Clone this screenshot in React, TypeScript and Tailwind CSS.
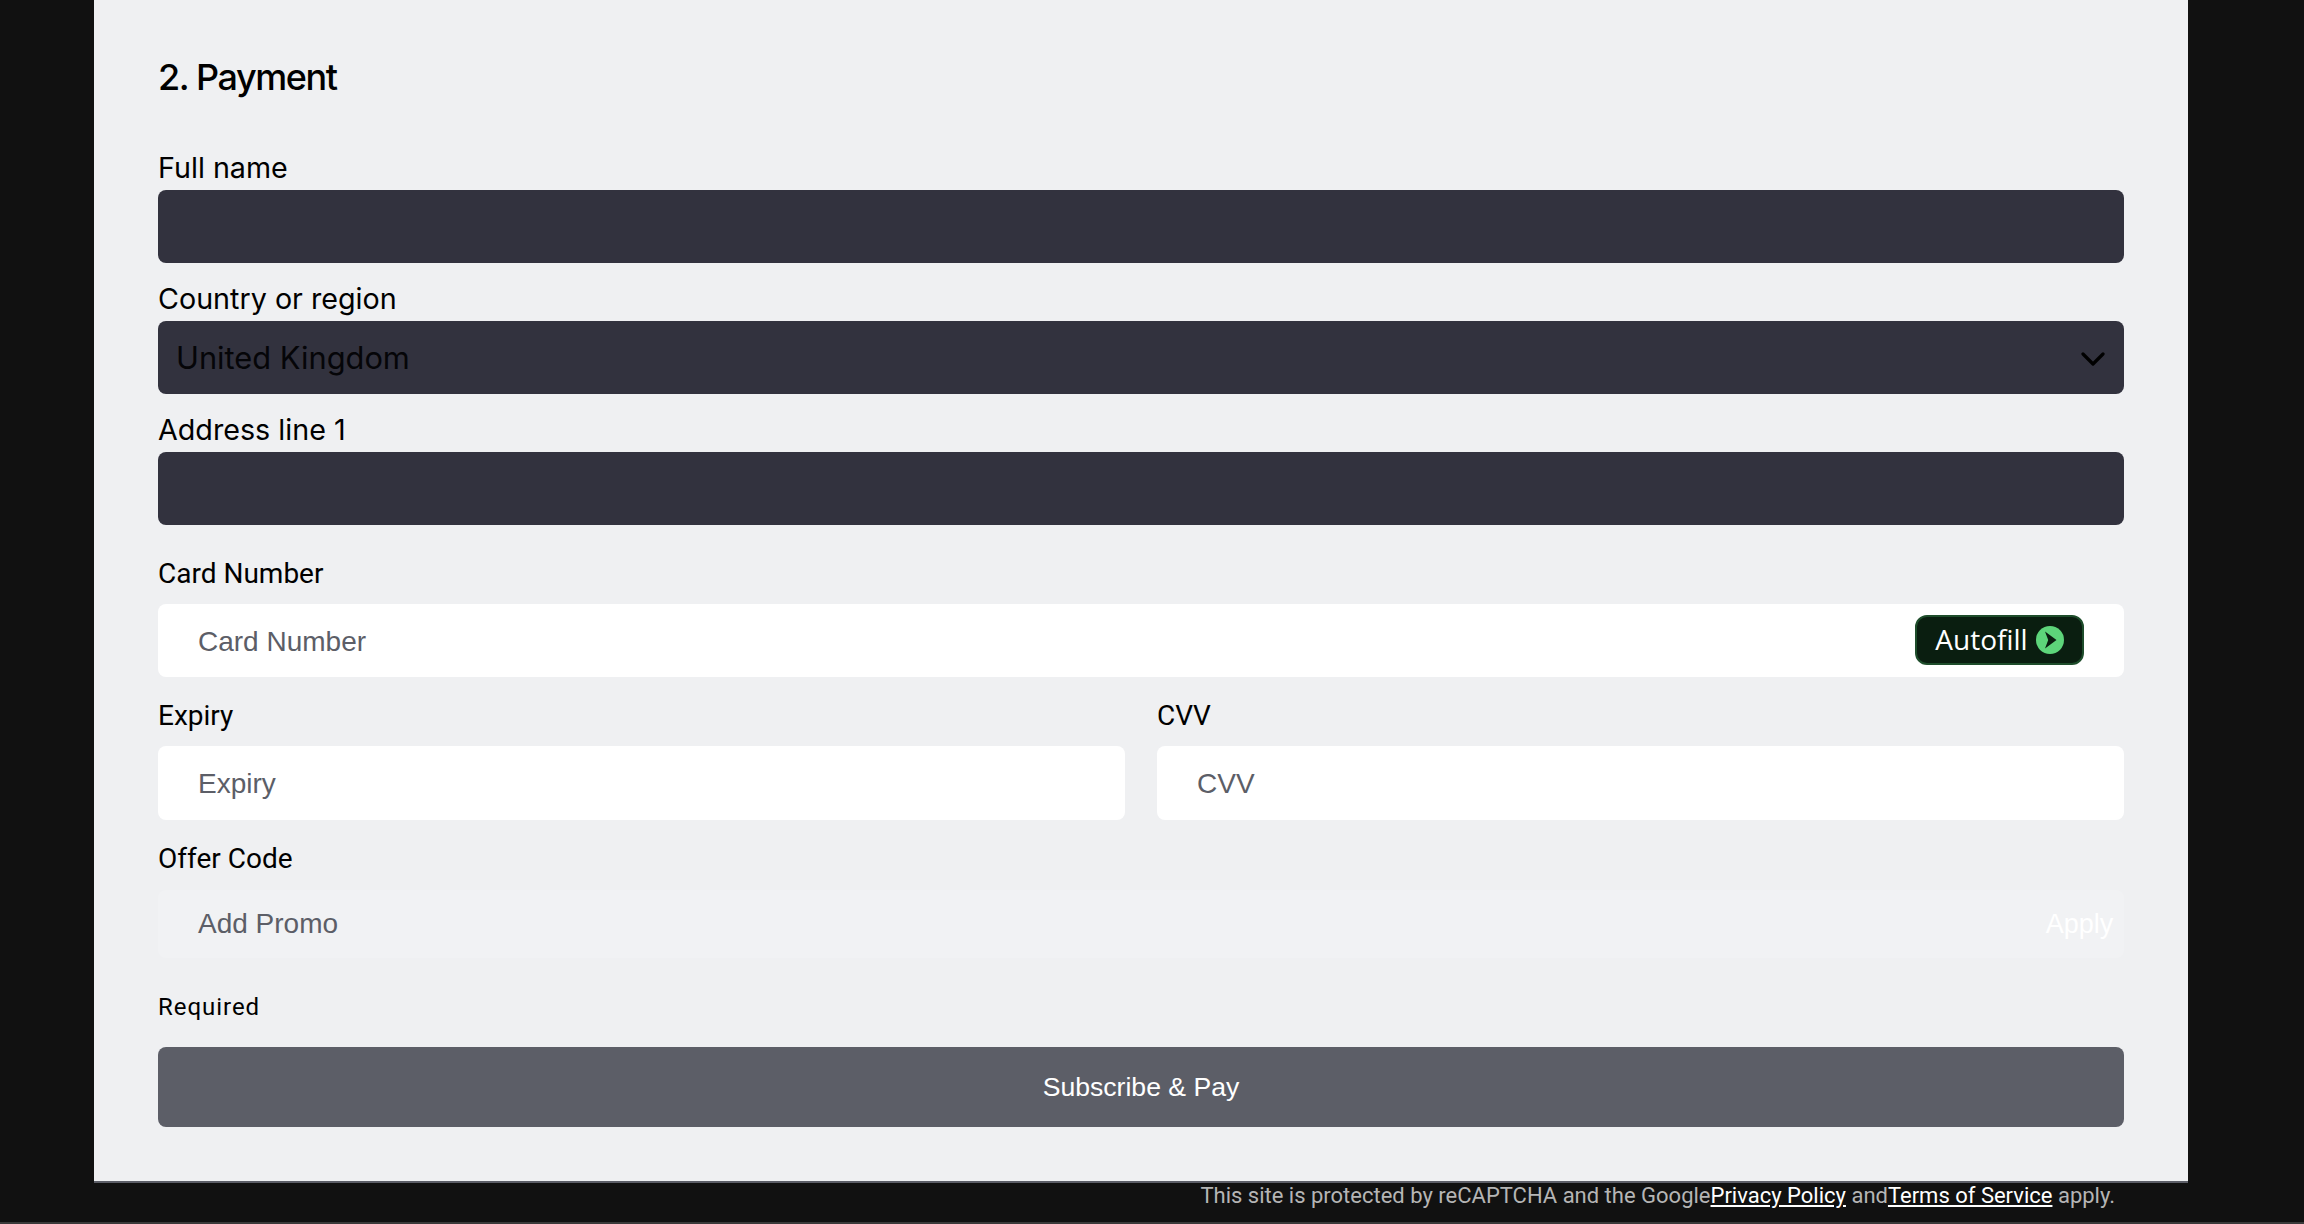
const INTER = "font-['Inter',sans-serif]";

function DarkField({ label, children }: { label: string; children?: React.ReactNode }) {
	return (
		<div className="flex flex-col">
			<label className={`${INTER} mt-[1px] mb-[5px] text-[28.7px] leading-[34px] text-black`}>{label}</label>
			<div className="flex h-[73px] items-center justify-between rounded-lg bg-[#32323e] px-[18px] pt-[1px]">
				{children}
			</div>
		</div>
	);
}

function CardField({ label, placeholder, tall, children }: { label: string; placeholder: string; tall?: boolean; children?: React.ReactNode }) {
	return (
		<div className="flex flex-col">
			<label className="mt-[1px] mb-[13px] font-['Roboto',sans-serif] text-[28px] leading-[34px] text-black">{label}</label>
			<div className={`flex items-center justify-between rounded-lg bg-white pr-[40px] pl-[40px] ${tall ? 'h-[74px]' : 'h-[73px]'}`}>
				<span className="pt-[2px] font-['Liberation_Sans',sans-serif] text-[28px] text-[#5c5e67]">{placeholder}</span>
				{children}
			</div>
		</div>
	);
}

export default function App() {
	return (
		<div className="flex h-screen flex-col overflow-hidden bg-[#111111]">
			<div className="ml-[94px] mr-[116px] flex flex-col border-b-2 border-[#5c5e67] bg-[#eff0f2] px-[64px] pt-[57px] pb-[54px]">
				<h2 className={`${INTER} mb-[53px] text-[36px] leading-[40px] font-[550] tracking-[-0.04em] text-black`}>2. Payment</h2>

				<div className="flex flex-col gap-[18px]">
					<DarkField label="Full name" />
					<DarkField label="Country or region">
						<span className={`${INTER} text-[30.8px] text-[#050508]`}>United Kingdom</span>
						<svg width="24" height="14" viewBox="0 0 24 14" fill="none" className="mt-[2px] mr-[1px]">
							<path d="M2 2l10 10L22 2" stroke="#000" strokeWidth="3.2" strokeLinecap="round" strokeLinejoin="round" />
						</svg>
					</DarkField>
					<DarkField label="Address line 1" />
				</div>

				<div className="mt-[31px] flex flex-col gap-[21px]">
					<CardField label="Card Number" placeholder="Card Number">
						<button className="mb-[1px] flex h-[50px] w-[169px] items-center justify-center gap-[8px] rounded-[12px] border-2 border-[#1e4d2b] bg-[#0a1e10] pb-[2px] font-['Open_Sans',sans-serif] text-[28px] text-white">
							Autofill
							<svg width="28" height="28" viewBox="0 0 28 28" className="mt-[2px]">
								<circle cx="14" cy="14" r="14" fill="#5dd57a" />
								<path d="M9 5.5l11.5 8.5L9 22.5l3.2-8.5z" fill="#0a1e10" />
							</svg>
						</button>
					</CardField>
					<div className="grid grid-cols-2 gap-[32px]">
						<CardField label="Expiry" placeholder="Expiry" tall />
						<CardField label="CVV" placeholder="CVV" tall />
					</div>
					<div className="mt-[1px] flex flex-col">
						<label className="mb-[14px] font-['Roboto',sans-serif] text-[28px] leading-[34px] text-black">Offer Code</label>
						<div className="flex h-[68px] items-center justify-between rounded-lg bg-[#f1f2f4] pl-[40px]">
							<span className="font-['Liberation_Sans',sans-serif] text-[28px] text-[#5c5e67]">Add Promo</span>
							<span className="flex h-full w-[89px] items-center justify-center rounded-lg bg-[#f1f2f4] font-['Liberation_Sans',sans-serif] text-[27px] text-white">Apply</span>
						</div>
					</div>
				</div>

				<p className="mt-[34px] mb-[25px] font-['Roboto',sans-serif] text-[24px] leading-[30px] tracking-[0.04em] text-black">Required</p>

				<button className="flex h-[80px] items-center justify-center rounded-lg bg-[#5c5e67] pt-[2px] font-['Liberation_Sans',sans-serif] text-[26.6px] text-white">
					Subscribe &amp; Pay
				</button>
			</div>

			<div className="flex-1 border-b-2 border-[#3a3a3a] pt-[1px]">
				<p className="pr-[189px] text-right font-['Roboto',sans-serif] text-[22px] leading-[24px] text-[#b5b5b5]">
					This site is protected by reCAPTCHA and the Google
					<a className="text-white underline">Privacy Policy</a> and
					<a className="text-white underline">Terms of Service</a> apply.
				</p>
			</div>
		</div>
	);
}
